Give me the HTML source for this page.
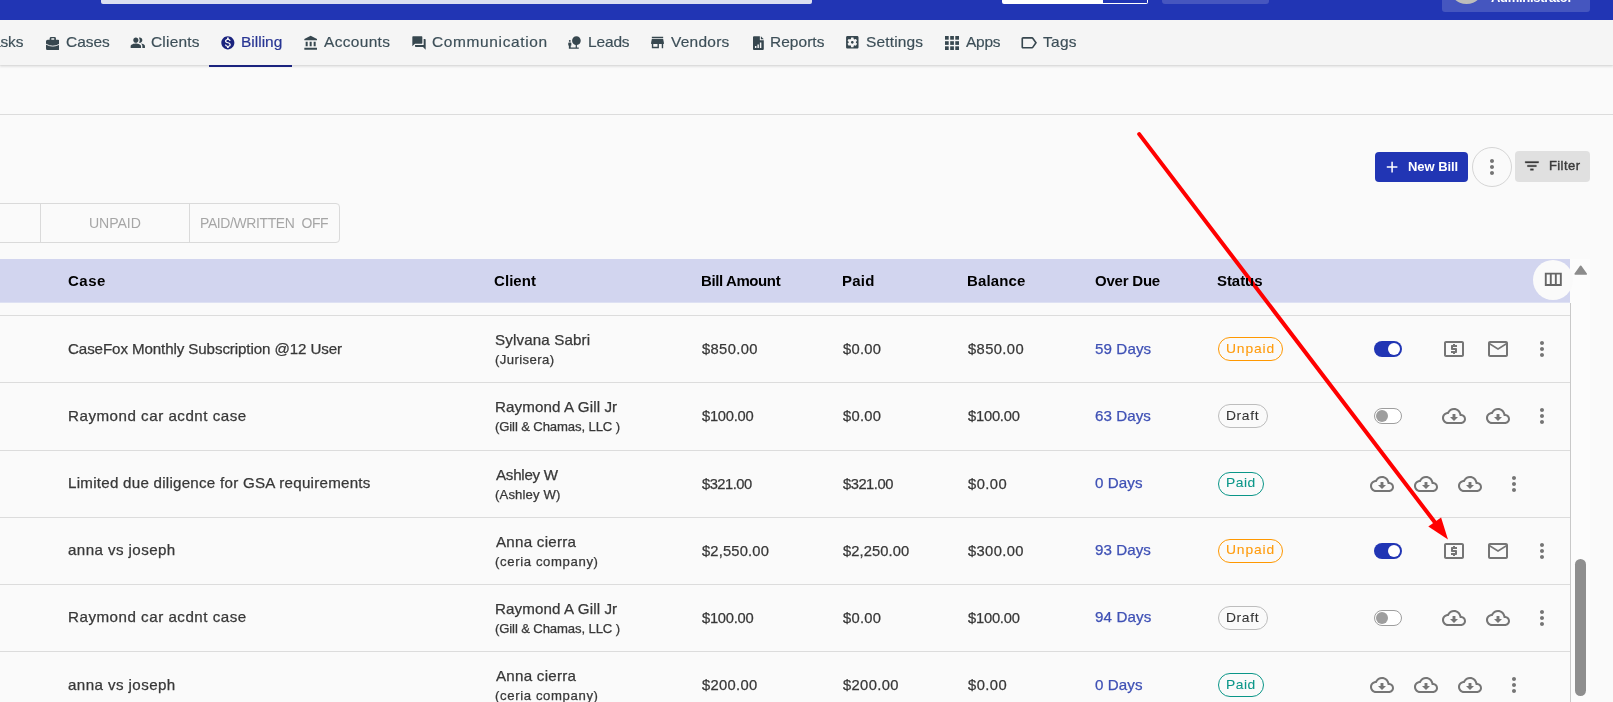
<!DOCTYPE html>
<html><head><meta charset="utf-8"><title>Billing</title>
<style>
html,body{margin:0;padding:0}
body{width:1613px;height:702px;overflow:hidden;background:#fafafa;position:relative;font-family:"Liberation Sans", sans-serif}
div,svg,span{position:absolute;box-sizing:border-box}
.t{white-space:pre;line-height:20px;-webkit-text-stroke:.25px currentColor}
.tl{left:0;top:0;width:1613px;height:702px;will-change:transform}
.topbar{left:0;top:0;width:1613px;height:20px;background:#2135b4}
.search{left:101px;top:-6px;width:711px;height:9.500px;background:#dcdff1;border-radius:2px}
.wbox{left:1002px;top:-6px;width:146px;height:10px;background:#fff;border-radius:2px;overflow:hidden}
.wbox2{left:101px;top:0;width:44px;height:9px;background:#2135b4}
.tbtn{left:1162px;top:-6px;width:107px;height:10px;background:#4656bf;border-radius:3px}
.admin{left:1442px;top:-10px;width:148px;height:22px;background:#4556bf;border-radius:3px;overflow:hidden}
.avatar{left:6.500px;top:-21px;width:35px;height:35px;border-radius:50%;background:#bebebb}
.admtxt{left:49px;top:-2px;color:#fff;font-weight:700;font-size:14px;line-height:14px;white-space:pre}
.nav{left:0;top:20px;width:1613px;height:45px;background:#f5f5f5;box-shadow:0 1.500px 2px rgba(0,0,0,.09),0 1px 1px rgba(0,0,0,.04)}
.navul{left:209px;top:65px;width:83px;height:2px;background:#1a237e}
.hline{left:0;top:114px;width:1613px;height:1px;background:#dcdcdc}
.newbill{left:1375px;top:152px;width:93px;height:30px;background:#2135b4;border-radius:4px}
.circ{left:1472px;top:146.500px;width:40px;height:40px;border-radius:50%;border:1px solid #d5d5d5;background:#fafafa}
.filter{left:1515px;top:151px;width:75px;height:31px;background:#e0e0e0;border-radius:4px}
.tabs{left:-10px;top:203px;width:350px;height:39.500px;border:1px solid #dadada;border-radius:4px}
.tdiv{top:0;width:1px;height:38px;background:#dadada;margin-left:9px}
.thead{left:0;top:259px;width:1570px;height:43px;background:#d2d5ef}
.thead2{left:0;top:302px;width:1570px;height:1px;background:rgba(210,213,239,.7)}
.sbtrack{left:1570px;top:258.500px;width:20px;height:445px;background:#fcfcfc}
.vline{left:1570px;top:302.500px;width:1px;height:400px;background:#c9c9c9}
.colbtn{left:1533px;top:259.800px;width:40px;height:40px;border-radius:50%;background:#fafafa}
.sbthumb{left:1575.200px;top:559px;width:11px;height:137px;border-radius:5.500px;background:#8f8f8f}
.rline{left:0;width:1570px;height:1px;background:#dcdcdc}
.chip{height:24px;border:1px solid;border-radius:12px}
.tog{left:1374px;width:28px;height:16px;border-radius:8px}
.tog.on{background:#2135b4}
.tog.on i{position:absolute;left:14px;top:2px;width:12px;height:12px;border-radius:50%;background:#fff}
.tog.off{background:#fff;border:1px solid #9e9e9e}
.tog.off i{position:absolute;left:1px;top:1px;width:12px;height:12px;border-radius:50%;background:#9e9e9e}
</style></head>
<body>
<div class="topbar"></div>
<div class="search"></div>
<div class="wbox"><div class="wbox2"></div></div>
<div class="tbtn"></div>
<div class="admin"><div class="avatar"></div></div>
<div class="nav"></div>
<div class="navul"></div>
<div class="hline"></div>
<svg class="ic" style="left:130.20px;top:34.90px" width="15.60" height="15.60" viewBox="0 0 24 24" fill="#37474f"><path d="M16.67 13.13C18.04 14.06 19 15.32 19 17v3h4v-3c0-2.18-3.57-3.47-6.330-3.870zM9 12c2.21 0 4-1.79 4-4s-1.790-4-4-4-4 1.790-4 4 1.790 4 4 4zm0 1c-2.670 0-8 1.340-8 4v3h16v-3c0-2.660-5.330-4-8-4zm6-1c2.210 0 4-1.790 4-4s-1.790-4-4-4c-.47 0-.91.100-1.330.240C14.500 5.270 15 6.580 15 8s-.5 2.730-1.330 3.760c.42.140.86.240 1.330.240z"/></svg>
<svg class="ic" style="left:219.80px;top:34.50px" width="15.70" height="15.70" viewBox="0 0 24 24" fill="#1a237e"><path d="M12 2C6.480 2 2 6.480 2 12s4.480 10 10 10 10-4.480 10-10S17.520 2 12 2zm1.410 16.090V20h-2.670v-1.930c-1.710-.36-3.160-1.460-3.270-3.400h1.960c.1 1.050.82 1.870 2.650 1.870 1.960 0 2.400-.98 2.400-1.590 0-.83-.44-1.610-2.670-2.140-2.480-.6-4.180-1.620-4.180-3.670 0-1.720 1.390-2.840 3.110-3.210V4h2.670v1.950c1.860.45 2.790 1.860 2.850 3.390H14.300c-.05-1.110-.64-1.870-2.220-1.870-1.500 0-2.400.68-2.400 1.640 0 .84.650 1.390 2.670 1.910s4.180 1.390 4.180 3.910c-.010 1.830-1.380 2.830-3.120 3.160z"/></svg>
<svg class="ic" style="left:303.40px;top:35.15px" width="16.00" height="16.00" viewBox="0 0 24 24" fill="#37474f"><path d="M4 10v7h3v-7H4zm6 0v7h3v-7h-3zM2 22h19v-3H2v3zm14-12v7h3v-7h-3zm-4.500-9L2 6v2h19V6l-9.500-5z"/></svg>
<svg class="ic" style="left:410.50px;top:35.10px" width="16.00" height="16.00" viewBox="0 0 24 24" fill="#37474f"><path d="M21 6h-2v9H6v2c0 .55.45 1 1 1h11l4 4V7c0-.55-.45-1-1-1zm-4 6V3c0-.55-.45-1-1-1H3c-.55 0-1 .45-1 1v14l4-4h10c.55 0 1-.45 1-1z"/></svg>
<svg class="ic" style="left:567.15px;top:35.00px" width="14.90" height="14.90" viewBox="0 0 24 24" fill="#37474f"><path d="M22.170 9.170c0-3.870-3.130-7-7-7s-7 3.130-7 7c0 3.470 2.520 6.340 5.830 6.890V20H6v-3h1v-4c0-.55-.45-1-1-1H3c-.55 0-1 .45-1 1v4h1v5h16v-2h-3v-3.880c3.470-.41 6.170-3.360 6.170-6.950zM4.500 11c.83 0 1.500-.67 1.500-1.500S5.330 8 4.500 8 3 8.670 3 9.500 3.670 11 4.500 11z"/></svg>
<svg class="ic" style="left:649.25px;top:34.05px" width="17.00" height="17.00" viewBox="0 0 24 24" fill="#37474f"><path d="M20 4H4v2h16V4zm1 10v-2l-1-5H4l-1 5v2h1v6h10v-6h4v6h2v-6h1zm-9 4H6v-4h6v4z"/></svg>
<svg class="ic" style="left:844.20px;top:34.30px" width="16.60" height="16.60" viewBox="0 0 24 24" fill="#37474f"><path d="M12 10c-1.100 0-2 .9-2 2s.9 2 2 2 2-.9 2-2-.9-2-2-2zm7-7H5c-1.110 0-2 .9-2 2v14c0 1.100.89 2 2 2h14c1.110 0 2-.9 2-2V5c0-1.100-.89-2-2-2zm-1.750 9c0 .23-.02.46-.05.680l1.480 1.160c.13.110.17.300.08.450l-1.400 2.420c-.09.150-.27.210-.43.150l-1.740-.7c-.36.280-.76.510-1.180.690l-.26 1.850c-.03.170-.18.300-.35.300h-2.800c-.17 0-.32-.13-.35-.290l-.26-1.850c-.43-.18-.82-.41-1.180-.690l-1.740.7c-.16.060-.34 0-.43-.15l-1.400-2.420c-.09-.15-.05-.34.080-.45l1.480-1.160c-.03-.23-.05-.46-.05-.690 0-.23.020-.46.050-.680l-1.480-1.160c-.13-.11-.17-.30-.08-.45l1.400-2.420c.09-.15.270-.21.430-.15l1.740.7c.36-.28.760-.51 1.180-.690l.26-1.850c.03-.17.180-.30.350-.30h2.800c.17 0 .32.130.35.290l.26 1.850c.43.180.82.410 1.180.690l1.740-.7c.16-.06.34 0 .43.150l1.400 2.420c.09.150.05.340-.08.450l-1.480 1.160c.03.230.05.460.05.690z"/></svg>
<svg class="ic" style="left:1019.10px;top:32.90px" width="19.60" height="19.60" viewBox="0 0 24 24" fill="#37474f"><path d="M17.630 5.840C17.270 5.330 16.670 5 16 5L5 5.010C3.900 5.010 3 5.900 3 7v10c0 1.100.9 1.990 2 1.990L16 19c.67 0 1.270-.33 1.630-.840L22 12l-4.370-6.160zM16 17H5V7h11l3.550 5L16 17z"/></svg>
<svg class="ic" style="left:45.8px;top:36.6px" width="13.6" height="13.3" viewBox="0 0 28 27.400"><path fill="#37474f" fill-rule="evenodd" d="M10.500 0h7a3 3 0 0 1 3 3v2.500h4a3.500 3.500 0 0 1 3.500 3.500v14a4.400 4.400 0 0 1-4.400 4.400H4.400a4.400 4.400 0 0 1-4.400-4.400V9a3.500 3.500 0 0 1 3.500-3.500h4V3a3 3 0 0 1 3-3zm.500 2.600v2.900h6V2.600z"/><path d="M0 14.800Q14 22.800 28 14.800" stroke="#f5f5f5" stroke-width="1.900" fill="none"/></svg>
<svg class="ic" style="left:752.8px;top:35.8px" width="10.8" height="14.2" viewBox="0 0 22 28"><path fill="#37474f" d="M2 0h12v8h8v18a2 2 0 0 1-2 2H2a2 2 0 0 1-2-2V2a2 2 0 0 1 2-2zm14 0l6 6h-6zM4 20v4h3v-4zm5-3v7h3v-7zm5-4v11h3V13z" fill-rule="evenodd"/></svg>
<svg class="ic" style="left:944.9px;top:36px" width="14" height="14" viewBox="0 0 14 14" fill="#37474f"><rect x="0.0" y="0.0" width="3.700" height="3.700"/><rect x="0.0" y="5.2" width="3.700" height="3.700"/><rect x="0.0" y="10.3" width="3.700" height="3.700"/><rect x="5.2" y="0.0" width="3.700" height="3.700"/><rect x="5.2" y="5.2" width="3.700" height="3.700"/><rect x="5.2" y="10.3" width="3.700" height="3.700"/><rect x="10.3" y="0.0" width="3.700" height="3.700"/><rect x="10.3" y="5.2" width="3.700" height="3.700"/><rect x="10.3" y="10.3" width="3.700" height="3.700"/></svg>
<div class="newbill"></div>
<svg class="ic" style="left:1382.80px;top:158.10px" width="18.20" height="18.20" viewBox="0 0 24 24" fill="#fff"><path d="M19 13h-6v6h-2v-6H5v-2h6V5h2v6h6v2z"/></svg>
<div class="circ"></div>
<svg class="ic" style="left:1480.00px;top:155.00px" width="24.00" height="24.00" viewBox="0 0 24 24" fill="#757575"><path d="M12 8c1.1 0 2-.9 2-2s-.9-2-2-2-2 .9-2 2 .9 2 2 2zm0 2c-1.1 0-2 .9-2 2s.9 2 2 2 2-.9 2-2-.9-2-2-2zm0 6c-1.1 0-2 .9-2 2s.9 2 2 2 2-.9 2-2-.9-2-2-2z"/></svg>
<div class="filter"></div>
<svg class="ic" style="left:1523.20px;top:157.20px" width="17.80" height="17.80" viewBox="0 0 24 24" fill="#3a3a3a" stroke="#3a3a3a" stroke-width=".5"><path d="M10 18h4v-2h-4v2zM3 6v2h18V6H3zm3 7h12v-2H6v2z"/></svg>
<div class="tabs"><div class="tdiv" style="left:40px"></div><div class="tdiv" style="left:189px"></div></div>
<div class="thead"></div><div class="thead2"></div>
<div class="sbtrack"></div>
<div class="vline"></div>
<div class="colbtn"></div>
<svg class="ic" style="left:1542.20px;top:268.10px" width="22.60" height="22.60" viewBox="0 0 24 24" fill="#666"><path d="M3 5v14h18V5H3zm5.330 12H5V7h3.330v10zm5.340 0h-3.330V7h3.330v10zM19 17h-3.330V7H19v10z"/></svg>
<svg class="ic" style="left:1573.5px;top:264.5px" width="14" height="11" viewBox="0 0 14 11"><path d="M6.700 1.300L12.200 9H1.200z" fill="#8c8c8c" stroke="#8c8c8c" stroke-width="1.600" stroke-linejoin="round"/></svg>
<div class="sbthumb"></div>
<div class="rline" style="top:315px"></div>
<div class="chip" style="left:1218px;top:337px;width:65px;border-color:#ff9800"></div>
<div class="tog on" style="top:341.00px"><i></i></div>
<svg class="ic" style="left:1442.00px;top:337.00px" width="24.00" height="24.00" viewBox="0 0 24 24" fill="#757575"><path d="M11 17h2v-1h1c.55 0 1-.45 1-1v-3c0-.55-.45-1-1-1h-3v-1h4V8h-2V7h-2v1h-1c-.55 0-1 .45-1 1v3c0 .55.45 1 1 1h3v1H9v2h2v1zm9-13H4c-1.11 0-1.99.89-1.99 2L2 18c0 1.11.89 2 2 2h16c1.11 0 2-.89 2-2V6c0-1.11-.89-2-2-2zm0 14H4V6h16v12z"/></svg>
<svg class="ic" style="left:1486.00px;top:337.00px" width="24.00" height="24.00" viewBox="0 0 24 24" fill="#757575"><path d="M20 4H4c-1.1 0-1.99.9-1.99 2L2 18c0 1.1.9 2 2 2h16c1.1 0 2-.9 2-2V6c0-1.1-.9-2-2-2zm0 14H4V8l8 5 8-5v10zm-8-7L4 6h16l-8 5z"/></svg>
<svg class="ic" style="left:1530.00px;top:337.00px" width="24.00" height="24.00" viewBox="0 0 24 24" fill="#757575"><path d="M12 8c1.1 0 2-.9 2-2s-.9-2-2-2-2 .9-2 2 .9 2 2 2zm0 2c-1.1 0-2 .9-2 2s.9 2 2 2 2-.9 2-2-.9-2-2-2zm0 6c-1.1 0-2 .9-2 2s.9 2 2 2 2-.9 2-2-.9-2-2-2z"/></svg>
<div class="rline" style="top:382px"></div>
<div class="chip" style="left:1218px;top:404px;width:50px;border-color:#bdbdbd"></div>
<div class="tog off" style="top:408.25px"><i></i></div>
<svg class="ic" style="left:1442.00px;top:404.25px" width="24.00" height="24.00" viewBox="0 0 24 24" fill="#757575"><path d="M19.35 10.04C18.67 6.59 15.64 4 12 4 9.11 4 6.6 5.64 5.35 8.04 2.34 8.36 0 10.91 0 14c0 3.31 2.69 6 6 6h13c2.76 0 5-2.24 5-5 0-2.64-2.05-4.78-4.65-4.96zM19 18H6c-2.21 0-4-1.79-4-4 0-2.05 1.53-3.76 3.56-3.97l1.07-.11.5-.95C8.08 7.14 9.94 6 12 6c2.62 0 4.88 1.86 5.39 4.43l.3 1.5 1.53.11c1.56.1 2.78 1.41 2.78 2.96 0 1.65-1.35 3-3 3zm-5.55-8h-2.9v3H8l4 4 4-4h-2.55z"/></svg>
<svg class="ic" style="left:1486.00px;top:404.25px" width="24.00" height="24.00" viewBox="0 0 24 24" fill="#757575"><path d="M19.35 10.04C18.67 6.59 15.64 4 12 4 9.11 4 6.6 5.64 5.35 8.04 2.34 8.36 0 10.91 0 14c0 3.31 2.69 6 6 6h13c2.76 0 5-2.24 5-5 0-2.64-2.05-4.78-4.65-4.96zM19 18H6c-2.21 0-4-1.79-4-4 0-2.05 1.53-3.76 3.56-3.97l1.07-.11.5-.95C8.08 7.14 9.94 6 12 6c2.62 0 4.88 1.86 5.39 4.43l.3 1.5 1.53.11c1.56.1 2.78 1.41 2.78 2.96 0 1.65-1.35 3-3 3zm-5.55-8h-2.9v3H8l4 4 4-4h-2.55z"/></svg>
<svg class="ic" style="left:1530.00px;top:404.25px" width="24.00" height="24.00" viewBox="0 0 24 24" fill="#757575"><path d="M12 8c1.1 0 2-.9 2-2s-.9-2-2-2-2 .9-2 2 .9 2 2 2zm0 2c-1.1 0-2 .9-2 2s.9 2 2 2 2-.9 2-2-.9-2-2-2zm0 6c-1.1 0-2 .9-2 2s.9 2 2 2 2-.9 2-2-.9-2-2-2z"/></svg>
<div class="rline" style="top:450px"></div>
<div class="chip" style="left:1218px;top:472px;width:46px;border-color:#0a9688"></div>
<svg class="ic" style="left:1370.00px;top:471.50px" width="24.00" height="24.00" viewBox="0 0 24 24" fill="#757575"><path d="M19.35 10.04C18.67 6.59 15.64 4 12 4 9.11 4 6.6 5.64 5.35 8.04 2.34 8.36 0 10.91 0 14c0 3.31 2.69 6 6 6h13c2.76 0 5-2.24 5-5 0-2.64-2.05-4.78-4.65-4.96zM19 18H6c-2.21 0-4-1.79-4-4 0-2.05 1.53-3.76 3.56-3.97l1.07-.11.5-.95C8.08 7.14 9.94 6 12 6c2.62 0 4.88 1.86 5.39 4.43l.3 1.5 1.53.11c1.56.1 2.78 1.41 2.78 2.96 0 1.65-1.35 3-3 3zm-5.55-8h-2.9v3H8l4 4 4-4h-2.55z"/></svg>
<svg class="ic" style="left:1414.00px;top:471.50px" width="24.00" height="24.00" viewBox="0 0 24 24" fill="#757575"><path d="M19.35 10.04C18.67 6.59 15.64 4 12 4 9.11 4 6.6 5.64 5.35 8.04 2.34 8.36 0 10.91 0 14c0 3.31 2.69 6 6 6h13c2.76 0 5-2.24 5-5 0-2.64-2.05-4.78-4.65-4.96zM19 18H6c-2.21 0-4-1.79-4-4 0-2.05 1.53-3.76 3.56-3.97l1.07-.11.5-.95C8.08 7.14 9.94 6 12 6c2.62 0 4.88 1.86 5.39 4.43l.3 1.5 1.53.11c1.56.1 2.78 1.41 2.78 2.96 0 1.65-1.35 3-3 3zm-5.55-8h-2.9v3H8l4 4 4-4h-2.55z"/></svg>
<svg class="ic" style="left:1458.00px;top:471.50px" width="24.00" height="24.00" viewBox="0 0 24 24" fill="#757575"><path d="M19.35 10.04C18.67 6.59 15.64 4 12 4 9.11 4 6.6 5.64 5.35 8.04 2.34 8.36 0 10.91 0 14c0 3.31 2.69 6 6 6h13c2.76 0 5-2.24 5-5 0-2.64-2.05-4.78-4.65-4.96zM19 18H6c-2.21 0-4-1.79-4-4 0-2.05 1.53-3.76 3.56-3.97l1.07-.11.5-.95C8.08 7.14 9.94 6 12 6c2.62 0 4.88 1.86 5.39 4.43l.3 1.5 1.53.11c1.56.1 2.78 1.41 2.78 2.96 0 1.65-1.35 3-3 3zm-5.55-8h-2.9v3H8l4 4 4-4h-2.55z"/></svg>
<svg class="ic" style="left:1502.00px;top:471.50px" width="24.00" height="24.00" viewBox="0 0 24 24" fill="#757575"><path d="M12 8c1.1 0 2-.9 2-2s-.9-2-2-2-2 .9-2 2 .9 2 2 2zm0 2c-1.1 0-2 .9-2 2s.9 2 2 2 2-.9 2-2-.9-2-2-2zm0 6c-1.1 0-2 .9-2 2s.9 2 2 2 2-.9 2-2-.9-2-2-2z"/></svg>
<div class="rline" style="top:517px"></div>
<div class="chip" style="left:1218px;top:539px;width:65px;border-color:#ff9800"></div>
<div class="tog on" style="top:542.75px"><i></i></div>
<svg class="ic" style="left:1442.00px;top:538.75px" width="24.00" height="24.00" viewBox="0 0 24 24" fill="#757575"><path d="M11 17h2v-1h1c.55 0 1-.45 1-1v-3c0-.55-.45-1-1-1h-3v-1h4V8h-2V7h-2v1h-1c-.55 0-1 .45-1 1v3c0 .55.45 1 1 1h3v1H9v2h2v1zm9-13H4c-1.11 0-1.99.89-1.99 2L2 18c0 1.11.89 2 2 2h16c1.11 0 2-.89 2-2V6c0-1.11-.89-2-2-2zm0 14H4V6h16v12z"/></svg>
<svg class="ic" style="left:1486.00px;top:538.75px" width="24.00" height="24.00" viewBox="0 0 24 24" fill="#757575"><path d="M20 4H4c-1.1 0-1.99.9-1.99 2L2 18c0 1.1.9 2 2 2h16c1.1 0 2-.9 2-2V6c0-1.1-.9-2-2-2zm0 14H4V8l8 5 8-5v10zm-8-7L4 6h16l-8 5z"/></svg>
<svg class="ic" style="left:1530.00px;top:538.75px" width="24.00" height="24.00" viewBox="0 0 24 24" fill="#757575"><path d="M12 8c1.1 0 2-.9 2-2s-.9-2-2-2-2 .9-2 2 .9 2 2 2zm0 2c-1.1 0-2 .9-2 2s.9 2 2 2 2-.9 2-2-.9-2-2-2zm0 6c-1.1 0-2 .9-2 2s.9 2 2 2 2-.9 2-2-.9-2-2-2z"/></svg>
<div class="rline" style="top:584px"></div>
<div class="chip" style="left:1218px;top:606px;width:50px;border-color:#bdbdbd"></div>
<div class="tog off" style="top:610.00px"><i></i></div>
<svg class="ic" style="left:1442.00px;top:606.00px" width="24.00" height="24.00" viewBox="0 0 24 24" fill="#757575"><path d="M19.35 10.04C18.67 6.59 15.64 4 12 4 9.11 4 6.6 5.64 5.35 8.04 2.34 8.36 0 10.91 0 14c0 3.31 2.69 6 6 6h13c2.76 0 5-2.24 5-5 0-2.64-2.05-4.78-4.65-4.96zM19 18H6c-2.21 0-4-1.79-4-4 0-2.05 1.53-3.76 3.56-3.97l1.07-.11.5-.95C8.08 7.14 9.94 6 12 6c2.62 0 4.88 1.86 5.39 4.43l.3 1.5 1.53.11c1.56.1 2.78 1.41 2.78 2.96 0 1.65-1.35 3-3 3zm-5.55-8h-2.9v3H8l4 4 4-4h-2.55z"/></svg>
<svg class="ic" style="left:1486.00px;top:606.00px" width="24.00" height="24.00" viewBox="0 0 24 24" fill="#757575"><path d="M19.35 10.04C18.67 6.59 15.64 4 12 4 9.11 4 6.6 5.64 5.35 8.04 2.34 8.36 0 10.91 0 14c0 3.31 2.69 6 6 6h13c2.76 0 5-2.24 5-5 0-2.64-2.05-4.78-4.65-4.96zM19 18H6c-2.21 0-4-1.79-4-4 0-2.05 1.53-3.76 3.56-3.97l1.07-.11.5-.95C8.08 7.14 9.94 6 12 6c2.62 0 4.88 1.86 5.39 4.43l.3 1.5 1.53.11c1.56.1 2.78 1.41 2.78 2.96 0 1.65-1.35 3-3 3zm-5.55-8h-2.9v3H8l4 4 4-4h-2.55z"/></svg>
<svg class="ic" style="left:1530.00px;top:606.00px" width="24.00" height="24.00" viewBox="0 0 24 24" fill="#757575"><path d="M12 8c1.1 0 2-.9 2-2s-.9-2-2-2-2 .9-2 2 .9 2 2 2zm0 2c-1.1 0-2 .9-2 2s.9 2 2 2 2-.9 2-2-.9-2-2-2zm0 6c-1.1 0-2 .9-2 2s.9 2 2 2 2-.9 2-2-.9-2-2-2z"/></svg>
<div class="rline" style="top:651px"></div>
<div class="chip" style="left:1218px;top:673px;width:46px;border-color:#0a9688"></div>
<svg class="ic" style="left:1370.00px;top:673.25px" width="24.00" height="24.00" viewBox="0 0 24 24" fill="#757575"><path d="M19.35 10.04C18.67 6.59 15.64 4 12 4 9.11 4 6.6 5.64 5.35 8.04 2.34 8.36 0 10.91 0 14c0 3.31 2.69 6 6 6h13c2.76 0 5-2.24 5-5 0-2.64-2.05-4.78-4.65-4.96zM19 18H6c-2.21 0-4-1.79-4-4 0-2.05 1.53-3.76 3.56-3.97l1.07-.11.5-.95C8.08 7.14 9.94 6 12 6c2.62 0 4.88 1.86 5.39 4.43l.3 1.5 1.53.11c1.56.1 2.78 1.41 2.78 2.96 0 1.65-1.35 3-3 3zm-5.55-8h-2.9v3H8l4 4 4-4h-2.55z"/></svg>
<svg class="ic" style="left:1414.00px;top:673.25px" width="24.00" height="24.00" viewBox="0 0 24 24" fill="#757575"><path d="M19.35 10.04C18.67 6.59 15.64 4 12 4 9.11 4 6.6 5.64 5.35 8.04 2.34 8.36 0 10.91 0 14c0 3.31 2.69 6 6 6h13c2.76 0 5-2.24 5-5 0-2.64-2.05-4.78-4.65-4.96zM19 18H6c-2.21 0-4-1.79-4-4 0-2.05 1.53-3.76 3.56-3.97l1.07-.11.5-.95C8.08 7.14 9.94 6 12 6c2.62 0 4.88 1.86 5.39 4.43l.3 1.5 1.53.11c1.56.1 2.78 1.41 2.78 2.96 0 1.65-1.35 3-3 3zm-5.55-8h-2.9v3H8l4 4 4-4h-2.55z"/></svg>
<svg class="ic" style="left:1458.00px;top:673.25px" width="24.00" height="24.00" viewBox="0 0 24 24" fill="#757575"><path d="M19.35 10.04C18.67 6.59 15.64 4 12 4 9.11 4 6.6 5.64 5.35 8.04 2.34 8.36 0 10.91 0 14c0 3.31 2.69 6 6 6h13c2.76 0 5-2.24 5-5 0-2.64-2.05-4.78-4.65-4.96zM19 18H6c-2.21 0-4-1.79-4-4 0-2.05 1.53-3.76 3.56-3.97l1.07-.11.5-.95C8.08 7.14 9.94 6 12 6c2.62 0 4.88 1.86 5.39 4.43l.3 1.5 1.53.11c1.56.1 2.78 1.41 2.78 2.96 0 1.65-1.35 3-3 3zm-5.55-8h-2.9v3H8l4 4 4-4h-2.55z"/></svg>
<svg class="ic" style="left:1502.00px;top:673.25px" width="24.00" height="24.00" viewBox="0 0 24 24" fill="#757575"><path d="M12 8c1.1 0 2-.9 2-2s-.9-2-2-2-2 .9-2 2 .9 2 2 2zm0 2c-1.1 0-2 .9-2 2s.9 2 2 2 2-.9 2-2-.9-2-2-2zm0 6c-1.1 0-2 .9-2 2s.9 2 2 2 2-.9 2-2-.9-2-2-2z"/></svg>
<svg class="ic" style="left:0;top:0" width="1613" height="702" viewBox="0 0 1613 702"><line x1="1139.2" y1="134.1" x2="1436" y2="523.8" stroke="#ff0000" stroke-width="4" stroke-linecap="round"/><path d="M1448 539.600L1428.300 526.400L1441.100 517.600Z" fill="#ff0000"/></svg>
<div class="tl">
<span class="t" id="t0" style="left:-7.70px;top:32.00px;font-size:14.6px;font-weight:400;color:#3d4f58;letter-spacing:-0.139px;-webkit-text-stroke:.18px;transform:scaleX(1.06);transform-origin:0 50%;">asks</span>
<span class="t" id="t1" style="left:65.84px;top:32.00px;font-size:14.6px;font-weight:400;color:#3d4f58;letter-spacing:-0.009px;-webkit-text-stroke:.18px;transform:scaleX(1.06);transform-origin:0 50%;">Cases</span>
<span class="t" id="t2" style="left:150.78px;top:32.00px;font-size:14.6px;font-weight:400;color:#3d4f58;letter-spacing:0.188px;-webkit-text-stroke:.18px;transform:scaleX(1.06);transform-origin:0 50%;">Clients</span>
<span class="t" id="t3" style="left:240.85px;top:32.00px;font-size:14.6px;font-weight:400;color:#283593;letter-spacing:0.011px;-webkit-text-stroke:.18px;transform:scaleX(1.06);transform-origin:0 50%;">Billing</span>
<span class="t" id="t4" style="left:323.95px;top:32.00px;font-size:14.6px;font-weight:400;color:#3d4f58;letter-spacing:0.318px;-webkit-text-stroke:.18px;transform:scaleX(1.06);transform-origin:0 50%;">Accounts</span>
<span class="t" id="t5" style="left:431.57px;top:32.00px;font-size:14.6px;font-weight:400;color:#3d4f58;letter-spacing:0.606px;-webkit-text-stroke:.18px;transform:scaleX(1.06);transform-origin:0 50%;">Communication</span>
<span class="t" id="t6" style="left:587.58px;top:32.00px;font-size:14.6px;font-weight:400;color:#3d4f58;letter-spacing:-0.134px;-webkit-text-stroke:.18px;transform:scaleX(1.06);transform-origin:0 50%;">Leads</span>
<span class="t" id="t7" style="left:670.81px;top:32.00px;font-size:14.6px;font-weight:400;color:#3d4f58;letter-spacing:0.248px;-webkit-text-stroke:.18px;transform:scaleX(1.06);transform-origin:0 50%;">Vendors</span>
<span class="t" id="t8" style="left:769.84px;top:32.00px;font-size:14.6px;font-weight:400;color:#3d4f58;letter-spacing:0.041px;-webkit-text-stroke:.18px;transform:scaleX(1.06);transform-origin:0 50%;">Reports</span>
<span class="t" id="t9" style="left:865.99px;top:32.00px;font-size:14.6px;font-weight:400;color:#3d4f58;letter-spacing:0.147px;-webkit-text-stroke:.18px;transform:scaleX(1.06);transform-origin:0 50%;">Settings</span>
<span class="t" id="t10" style="left:965.52px;top:32.00px;font-size:14.6px;font-weight:400;color:#3d4f58;letter-spacing:-0.221px;-webkit-text-stroke:.18px;transform:scaleX(1.06);transform-origin:0 50%;">Apps</span>
<span class="t" id="t11" style="left:1043.16px;top:32.00px;font-size:14.6px;font-weight:400;color:#3d4f58;letter-spacing:0.257px;-webkit-text-stroke:.18px;transform:scaleX(1.06);transform-origin:0 50%;">Tags</span>
<span class="t" id="t12" style="left:89.38px;top:213.00px;font-size:15px;font-weight:400;color:#a6a6a6;letter-spacing:-0.089px;-webkit-text-stroke:0;transform:scaleX(0.94);transform-origin:0 50%;">UNPAID</span>
<span class="t" id="t13" style="left:200.04px;top:213.00px;font-size:15px;font-weight:400;color:#a6a6a6;letter-spacing:-0.405px;-webkit-text-stroke:0;transform:scaleX(0.93);transform-origin:0 50%;">PAID/WRITTEN  OFF</span>
<span class="t" id="t14" style="left:1408.00px;top:157.00px;font-size:13px;font-weight:700;color:#fff;letter-spacing:-0.048px;-webkit-text-stroke:0;">New Bill</span>
<span class="t" id="t15" style="left:1548.93px;top:156.00px;font-size:13px;font-weight:400;color:#3a3a3a;letter-spacing:0.433px;-webkit-text-stroke:.4px;">Filter</span>
<span class="t" id="t16" style="left:67.75px;top:271.00px;font-size:14px;font-weight:700;color:#000;letter-spacing:0.495px;transform:scaleX(1.07);transform-origin:0 50%;-webkit-text-stroke:0;">Case</span>
<span class="t" id="t17" style="left:493.97px;top:271.00px;font-size:14px;font-weight:700;color:#000;letter-spacing:0.068px;transform:scaleX(1.07);transform-origin:0 50%;-webkit-text-stroke:0;">Client</span>
<span class="t" id="t18" style="left:701.00px;top:271.00px;font-size:14px;font-weight:700;color:#000;letter-spacing:-0.362px;transform:scaleX(1.07);transform-origin:0 50%;-webkit-text-stroke:0;">Bill Amount</span>
<span class="t" id="t19" style="left:841.80px;top:271.00px;font-size:14px;font-weight:700;color:#000;letter-spacing:0.200px;transform:scaleX(1.07);transform-origin:0 50%;-webkit-text-stroke:0;">Paid</span>
<span class="t" id="t20" style="left:967.00px;top:271.00px;font-size:14px;font-weight:700;color:#000;letter-spacing:0.125px;transform:scaleX(1.07);transform-origin:0 50%;-webkit-text-stroke:0;">Balance</span>
<span class="t" id="t21" style="left:1094.75px;top:271.00px;font-size:14px;font-weight:700;color:#000;letter-spacing:-0.187px;transform:scaleX(1.07);transform-origin:0 50%;-webkit-text-stroke:0;">Over Due</span>
<span class="t" id="t22" style="left:1217.16px;top:271.00px;font-size:14px;font-weight:700;color:#000;letter-spacing:-0.056px;transform:scaleX(1.07);transform-origin:0 50%;-webkit-text-stroke:0;">Status</span>
<span class="t" id="t23" style="left:68.02px;top:339.00px;font-size:14.3px;font-weight:400;color:#383838;letter-spacing:-0.107px;transform:scaleX(1.06);transform-origin:0 50%;">CaseFox Monthly Subscription @12 User</span>
<span class="t" id="t24" style="left:495.00px;top:330.00px;font-size:14.3px;font-weight:400;color:#383838;letter-spacing:0.125px;transform:scaleX(1.06);transform-origin:0 50%;">Sylvana Sabri</span>
<span class="t" id="t25" style="left:495.24px;top:350.00px;font-size:12.4px;font-weight:400;color:#383838;letter-spacing:0.376px;transform:scaleX(1.06);transform-origin:0 50%;">(Jurisera)</span>
<span class="t" id="t26" style="left:701.91px;top:339.00px;font-size:14.3px;font-weight:400;color:#383838;letter-spacing:0.360px;transform:scaleX(1.03);transform-origin:0 50%;">$850.00</span>
<span class="t" id="t27" style="left:843.41px;top:339.00px;font-size:14.3px;font-weight:400;color:#383838;letter-spacing:0.262px;transform:scaleX(1.03);transform-origin:0 50%;">$0.00</span>
<span class="t" id="t28" style="left:967.91px;top:339.00px;font-size:14.3px;font-weight:400;color:#383838;letter-spacing:0.381px;transform:scaleX(1.03);transform-origin:0 50%;">$850.00</span>
<span class="t" id="t29" style="left:1095.15px;top:339.00px;font-size:14.3px;font-weight:400;color:#3f51b5;letter-spacing:0.091px;transform:scaleX(1.06);transform-origin:0 50%;">59 Days</span>
<span class="t" id="t30" style="left:1226.35px;top:339.00px;font-size:12.6px;font-weight:400;color:#ff9a0a;letter-spacing:0.774px;-webkit-text-stroke:.08px;transform:scaleX(1.1);transform-origin:0 50%;">Unpaid</span>
<span class="t" id="t31" style="left:67.62px;top:406.00px;font-size:14.3px;font-weight:400;color:#383838;letter-spacing:0.478px;transform:scaleX(1.06);transform-origin:0 50%;">Raymond car acdnt case</span>
<span class="t" id="t32" style="left:494.78px;top:397.00px;font-size:14.3px;font-weight:400;color:#383838;letter-spacing:0.102px;transform:scaleX(1.06);transform-origin:0 50%;">Raymond A Gill Jr</span>
<span class="t" id="t33" style="left:495.24px;top:417.00px;font-size:12.4px;font-weight:400;color:#383838;letter-spacing:-0.125px;transform:scaleX(1.06);transform-origin:0 50%;">(Gill &amp; Chamas, LLC )</span>
<span class="t" id="t34" style="left:701.91px;top:406.00px;font-size:14.3px;font-weight:400;color:#383838;letter-spacing:-0.266px;transform:scaleX(1.03);transform-origin:0 50%;">$100.00</span>
<span class="t" id="t35" style="left:843.41px;top:406.00px;font-size:14.3px;font-weight:400;color:#383838;letter-spacing:0.262px;transform:scaleX(1.03);transform-origin:0 50%;">$0.00</span>
<span class="t" id="t36" style="left:967.91px;top:406.00px;font-size:14.3px;font-weight:400;color:#383838;letter-spacing:-0.220px;transform:scaleX(1.03);transform-origin:0 50%;">$100.00</span>
<span class="t" id="t37" style="left:1095.01px;top:406.00px;font-size:14.3px;font-weight:400;color:#3f51b5;letter-spacing:0.043px;transform:scaleX(1.06);transform-origin:0 50%;">63 Days</span>
<span class="t" id="t38" style="left:1226.31px;top:406.00px;font-size:12.6px;font-weight:400;color:#333;letter-spacing:0.563px;-webkit-text-stroke:.08px;transform:scaleX(1.1);transform-origin:0 50%;">Draft</span>
<span class="t" id="t39" style="left:67.81px;top:473.00px;font-size:14.3px;font-weight:400;color:#383838;letter-spacing:0.232px;transform:scaleX(1.06);transform-origin:0 50%;">Limited due diligence for GSA requirements</span>
<span class="t" id="t40" style="left:495.64px;top:465.00px;font-size:14.3px;font-weight:400;color:#383838;letter-spacing:-0.252px;transform:scaleX(1.06);transform-origin:0 50%;">Ashley W</span>
<span class="t" id="t41" style="left:495.37px;top:485.00px;font-size:12.4px;font-weight:400;color:#383838;letter-spacing:0.115px;transform:scaleX(1.06);transform-origin:0 50%;">(Ashley W)</span>
<span class="t" id="t42" style="left:701.91px;top:474.00px;font-size:14.3px;font-weight:400;color:#383838;letter-spacing:-0.501px;transform:scaleX(1.03);transform-origin:0 50%;">$321.00</span>
<span class="t" id="t43" style="left:843.21px;top:474.00px;font-size:14.3px;font-weight:400;color:#383838;letter-spacing:-0.471px;transform:scaleX(1.03);transform-origin:0 50%;">$321.00</span>
<span class="t" id="t44" style="left:967.91px;top:474.00px;font-size:14.3px;font-weight:400;color:#383838;letter-spacing:0.441px;transform:scaleX(1.03);transform-origin:0 50%;">$0.00</span>
<span class="t" id="t45" style="left:1094.79px;top:473.00px;font-size:14.3px;font-weight:400;color:#3f51b5;letter-spacing:0.073px;transform:scaleX(1.06);transform-origin:0 50%;">0 Days</span>
<span class="t" id="t46" style="left:1226.12px;top:473.00px;font-size:12.6px;font-weight:400;color:#0a9688;letter-spacing:0.456px;-webkit-text-stroke:.08px;transform:scaleX(1.1);transform-origin:0 50%;">Paid</span>
<span class="t" id="t47" style="left:68.19px;top:540.00px;font-size:14.3px;font-weight:400;color:#383838;letter-spacing:0.387px;transform:scaleX(1.06);transform-origin:0 50%;">anna vs joseph</span>
<span class="t" id="t48" style="left:495.82px;top:532.00px;font-size:14.3px;font-weight:400;color:#383838;letter-spacing:0.236px;transform:scaleX(1.06);transform-origin:0 50%;">Anna cierra</span>
<span class="t" id="t49" style="left:495.18px;top:552.00px;font-size:12.4px;font-weight:400;color:#383838;letter-spacing:0.593px;transform:scaleX(1.06);transform-origin:0 50%;">(ceria company)</span>
<span class="t" id="t50" style="left:702.19px;top:541.00px;font-size:14.3px;font-weight:400;color:#383838;letter-spacing:0.161px;transform:scaleX(1.03);transform-origin:0 50%;">$2,550.00</span>
<span class="t" id="t51" style="left:843.21px;top:541.00px;font-size:14.3px;font-weight:400;color:#383838;letter-spacing:0.076px;transform:scaleX(1.03);transform-origin:0 50%;">$2,250.00</span>
<span class="t" id="t52" style="left:967.91px;top:541.00px;font-size:14.3px;font-weight:400;color:#383838;letter-spacing:0.360px;transform:scaleX(1.03);transform-origin:0 50%;">$300.00</span>
<span class="t" id="t53" style="left:1095.01px;top:540.00px;font-size:14.3px;font-weight:400;color:#3f51b5;letter-spacing:0.043px;transform:scaleX(1.06);transform-origin:0 50%;">93 Days</span>
<span class="t" id="t54" style="left:1226.35px;top:540.00px;font-size:12.6px;font-weight:400;color:#ff9a0a;letter-spacing:0.774px;-webkit-text-stroke:.08px;transform:scaleX(1.1);transform-origin:0 50%;">Unpaid</span>
<span class="t" id="t55" style="left:67.62px;top:607.00px;font-size:14.3px;font-weight:400;color:#383838;letter-spacing:0.478px;transform:scaleX(1.06);transform-origin:0 50%;">Raymond car acdnt case</span>
<span class="t" id="t56" style="left:494.78px;top:599.00px;font-size:14.3px;font-weight:400;color:#383838;letter-spacing:0.102px;transform:scaleX(1.06);transform-origin:0 50%;">Raymond A Gill Jr</span>
<span class="t" id="t57" style="left:495.24px;top:619.00px;font-size:12.4px;font-weight:400;color:#383838;letter-spacing:-0.125px;transform:scaleX(1.06);transform-origin:0 50%;">(Gill &amp; Chamas, LLC )</span>
<span class="t" id="t58" style="left:701.91px;top:608.00px;font-size:14.3px;font-weight:400;color:#383838;letter-spacing:-0.266px;transform:scaleX(1.03);transform-origin:0 50%;">$100.00</span>
<span class="t" id="t59" style="left:843.41px;top:608.00px;font-size:14.3px;font-weight:400;color:#383838;letter-spacing:0.262px;transform:scaleX(1.03);transform-origin:0 50%;">$0.00</span>
<span class="t" id="t60" style="left:967.91px;top:608.00px;font-size:14.3px;font-weight:400;color:#383838;letter-spacing:-0.220px;transform:scaleX(1.03);transform-origin:0 50%;">$100.00</span>
<span class="t" id="t61" style="left:1095.13px;top:607.00px;font-size:14.3px;font-weight:400;color:#3f51b5;letter-spacing:0.098px;transform:scaleX(1.06);transform-origin:0 50%;">94 Days</span>
<span class="t" id="t62" style="left:1226.31px;top:608.00px;font-size:12.6px;font-weight:400;color:#333;letter-spacing:0.563px;-webkit-text-stroke:.08px;transform:scaleX(1.1);transform-origin:0 50%;">Draft</span>
<span class="t" id="t63" style="left:68.19px;top:675.00px;font-size:14.3px;font-weight:400;color:#383838;letter-spacing:0.387px;transform:scaleX(1.06);transform-origin:0 50%;">anna vs joseph</span>
<span class="t" id="t64" style="left:495.82px;top:666.00px;font-size:14.3px;font-weight:400;color:#383838;letter-spacing:0.236px;transform:scaleX(1.06);transform-origin:0 50%;">Anna cierra</span>
<span class="t" id="t65" style="left:495.18px;top:686.00px;font-size:12.4px;font-weight:400;color:#383838;letter-spacing:0.593px;transform:scaleX(1.06);transform-origin:0 50%;">(ceria company)</span>
<span class="t" id="t66" style="left:701.91px;top:675.00px;font-size:14.3px;font-weight:400;color:#383838;letter-spacing:0.308px;transform:scaleX(1.03);transform-origin:0 50%;">$200.00</span>
<span class="t" id="t67" style="left:843.41px;top:675.00px;font-size:14.3px;font-weight:400;color:#383838;letter-spacing:0.360px;transform:scaleX(1.03);transform-origin:0 50%;">$200.00</span>
<span class="t" id="t68" style="left:967.91px;top:675.00px;font-size:14.3px;font-weight:400;color:#383838;letter-spacing:0.441px;transform:scaleX(1.03);transform-origin:0 50%;">$0.00</span>
<span class="t" id="t69" style="left:1094.79px;top:675.00px;font-size:14.3px;font-weight:400;color:#3f51b5;letter-spacing:0.073px;transform:scaleX(1.06);transform-origin:0 50%;">0 Days</span>
<span class="t" id="t70" style="left:1226.12px;top:675.00px;font-size:12.6px;font-weight:400;color:#0a9688;letter-spacing:0.456px;-webkit-text-stroke:.08px;transform:scaleX(1.1);transform-origin:0 50%;">Paid</span>
<span class="t" id="t71" style="left:1490.97px;top:-12.00px;font-size:13px;font-weight:700;color:#fff;letter-spacing:-0.303px;-webkit-text-stroke:0;">Administrator</span>
</div>
</body></html>
